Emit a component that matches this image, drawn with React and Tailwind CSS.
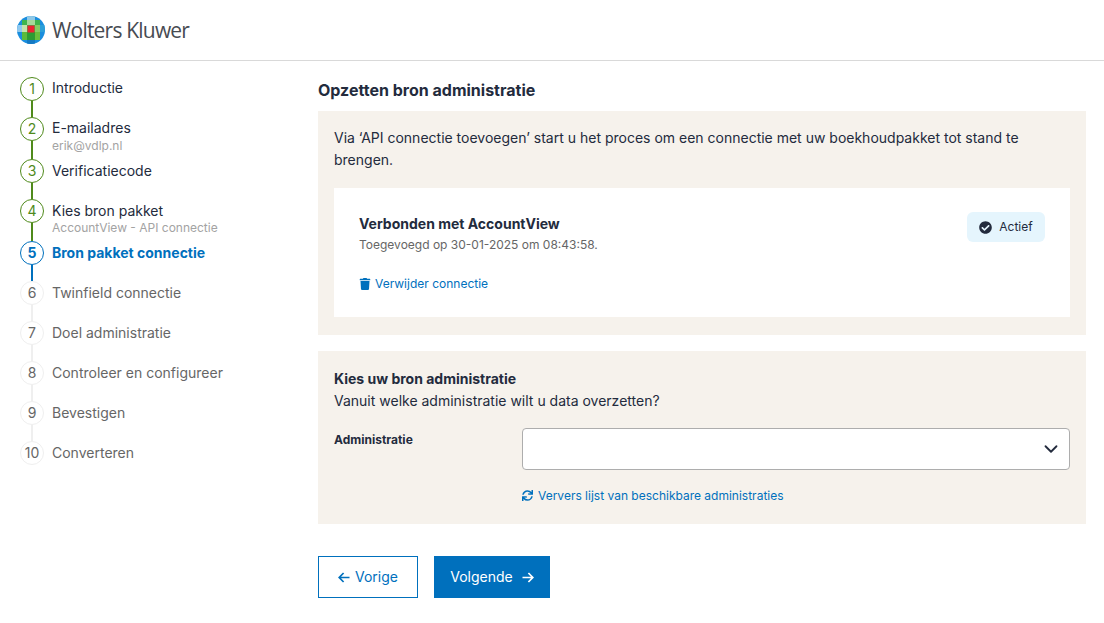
import { ChevronDown } from 'lucide-react';
import { FaCheckCircle, FaSync, FaTrash } from 'react-icons/fa';

const steps = [
    { n: 1, label: 'Introductie', state: 'done' },
    { n: 2, label: 'E-mailadres', sub: 'erik@vdlp.nl', subClass: 'mt-0', state: 'done' },
    { n: 3, label: 'Verificatiecode', state: 'done', nudge: true },
    { n: 4, label: 'Kies bron pakket', sub: 'AccountView - API connectie', subClass: '-mt-px', state: 'done', nudge: true },
    { n: 5, label: 'Bron pakket connectie', state: 'active', nudge: true },
    { n: 6, label: 'Twinfield connectie', state: 'todo', nudge: true },
    { n: 7, label: 'Doel administratie', state: 'todo', nudge: true },
    { n: 8, label: 'Controleer en configureer', state: 'todo', nudge: true },
    { n: 9, label: 'Bevestigen', state: 'todo', nudge: true },
    { n: 10, label: 'Converteren', state: 'todo', nudge: true },
];

const circleStyles = {
    done: 'border-[#4f8a1b] text-[#4f8a1b]',
    active: 'border-[#0070bd] text-[#0070bd] font-bold',
    todo: 'border-[#efefef] text-[#666666]',
};

const lineStyles = {
    done: 'bg-[#4f8a1b]',
    active: 'bg-[#0070bd]',
    todo: 'bg-[#efefef]',
};

const labelStyles = {
    done: 'text-[#232b3d]',
    active: 'text-[#0070bd] font-bold',
    todo: 'text-[#666666]',
};

function Globe() {
    return (
        <svg width="28" height="28" viewBox="0 0 28 28" className="shrink-0">
            <defs>
                <clipPath id="globe">
                    <circle cx="14" cy="14" r="14" />
                </clipPath>
            </defs>
            <g clipPath="url(#globe)">
                <rect width="28" height="28" fill="#1a8ede" />
                <rect x="5" y="4" width="18" height="20" fill="#3fb54c" />
                <rect x="0" y="9" width="5" height="7" fill="#8fc8ee" />
                <rect x="23" y="9" width="5" height="7" fill="#2b9fd8" />
                <rect x="10" y="0" width="8" height="4" fill="#8fc8e6" />
                <rect x="10" y="24" width="8" height="4" fill="#1579c2" />
                <rect x="5" y="9" width="5" height="7" fill="#c6e4ac" />
                <rect x="10" y="4" width="8" height="5" fill="#a5d99a" />
                <rect x="18" y="9" width="5" height="7" fill="#86cc62" />
                <rect x="10" y="16" width="8" height="8" fill="#2c9c34" />
                <rect x="5" y="16" width="5" height="8" fill="#5abb3a" />
                <rect x="18" y="16" width="5" height="8" fill="#68c03c" />
                <rect x="10.5" y="9.5" width="7" height="7" fill="#ec2330" />
            </g>
        </svg>
    );
}

function ArrowIcon({ flip }) {
    return (
        <svg width="12" height="11" viewBox="0 0 12 11" fill="none" stroke="currentColor" strokeWidth="1.7" className={flip ? '-scale-x-100' : ''}>
            <path d="M11.5 5.5H1.2M5.6 1L1.2 5.5L5.6 10" />
        </svg>
    );
}

function Step({ step, last }) {
    return (
        <div className={`flex ${step.sub ? 'h-[42px]' : 'h-10'}`}>
            <div className="flex w-6 flex-col items-center">
                <div className={`flex h-6 w-6 shrink-0 items-center justify-center rounded-full border text-sm leading-none ${circleStyles[step.state]}`}>
                    {step.n}
                </div>
                {!last && <div className={`w-0.5 flex-1 ${lineStyles[step.state]}`} />}
            </div>
            <div className={`ml-2 ${step.nudge ? 'pt-px' : ''}`}>
                <div className={`text-sm leading-[21px] ${labelStyles[step.state]}`}>{step.label}</div>
                {step.sub && <div className={`text-xs leading-[15px] text-[#a3a3a3] ${step.subClass}`}>{step.sub}</div>}
            </div>
        </div>
    );
}

export default function App() {
    return (
        <div className="min-h-screen bg-white font-['Inter',sans-serif] text-[#232b3d]">
            {/* Header */}
            <header className="flex h-[61px] items-center gap-[7px] border-b border-[#d9d9d9] pb-[1px] pl-[17px]">
                <Globe />
                <span className="mt-[3px] font-['Open_Sans',sans-serif] text-[21px] tracking-[-0.8px] text-[#474b52]">Wolters Kluwer</span>
            </header>

            <div className="flex">
                {/* Stappen */}
                <aside className="w-[318px] shrink-0 pl-5 pt-4">
                    {steps.map((step, i) => (
                        <Step key={step.n} step={step} last={i === steps.length - 1} />
                    ))}
                </aside>

                {/* Inhoud */}
                <main className="w-[768px] pt-[17px]">
                    <h1 className="text-base leading-6 font-bold">Opzetten bron administratie</h1>

                    <section className="mt-[9px] bg-[#f6f2ec] px-4 pt-4 pb-[18px]">
                        <p className="text-sm leading-[21.5px]">
                            Via ‘API connectie toevoegen’ start u het proces om een connectie met uw boekhoudpakket tot stand te brengen.
                        </p>
                        <div className="mt-[18px] flex h-[129px] flex-col bg-white px-[25px] pt-[23px]">
                            <div className="flex items-start justify-between">
                                <div>
                                    <h2 className="text-sm leading-[25px] font-bold">Verbonden met AccountView</h2>
                                    <p className="mt-px text-xs leading-[15px] text-[#666666]">Toegevoegd op 30-01-2025 om 08:43:58.</p>
                                </div>
                                <span className="mt-px flex h-[30px] w-[78px] items-center justify-center gap-[7px] rounded-md bg-[#e5f5fd] text-xs text-[#232b3d]">
                                    <FaCheckCircle className="text-[13px]" />
                                    Actief
                                </span>
                            </div>
                            <a className="mt-[24px] flex items-center gap-[4px] text-xs leading-[15px] text-[#0070bd]">
                                <FaTrash className="text-[12px]" />
                                Verwijder connectie
                            </a>
                        </div>
                    </section>

                    <section className="mt-4 h-[173px] bg-[#f6f2ec] px-4 pt-[17px]">
                        <h2 className="text-sm leading-[21px] font-bold">Kies uw bron administratie</h2>
                        <p className="mt-px text-sm leading-[21px]">Vanuit welke administratie wilt u data overzetten?</p>
                        <div className="mt-[17px] flex">
                            <label className="w-[188px] shrink-0 pt-px text-xs leading-[22px] font-bold">Administratie</label>
                            <div className="flex-1">
                                <div className="flex h-[42px] items-center justify-end rounded-[4px] border border-[#adadad] bg-white pr-[7px]">
                                    <ChevronDown size={22} strokeWidth={2} className="text-[#232b3d]" />
                                </div>
                                <a className="mt-[18px] flex items-center gap-[5px] text-xs leading-[15px] text-[#0070bd]">
                                    <FaSync className="text-[11px]" />
                                    Ververs lijst van beschikbare administraties
                                </a>
                            </div>
                        </div>
                    </section>

                    <div className="mt-8 flex gap-4">
                        <button className="flex h-[42px] w-[100px] items-center justify-center gap-[5px] border border-[#0070bd] bg-white text-sm text-[#0070bd]">
                            <ArrowIcon />
                            Vorige
                        </button>
                        <button className="flex h-[42px] w-[116px] items-center justify-center gap-[9px] bg-[#0070bd] text-sm text-white">
                            Volgende
                            <ArrowIcon flip />
                        </button>
                    </div>
                </main>
            </div>
        </div>
    );
}
